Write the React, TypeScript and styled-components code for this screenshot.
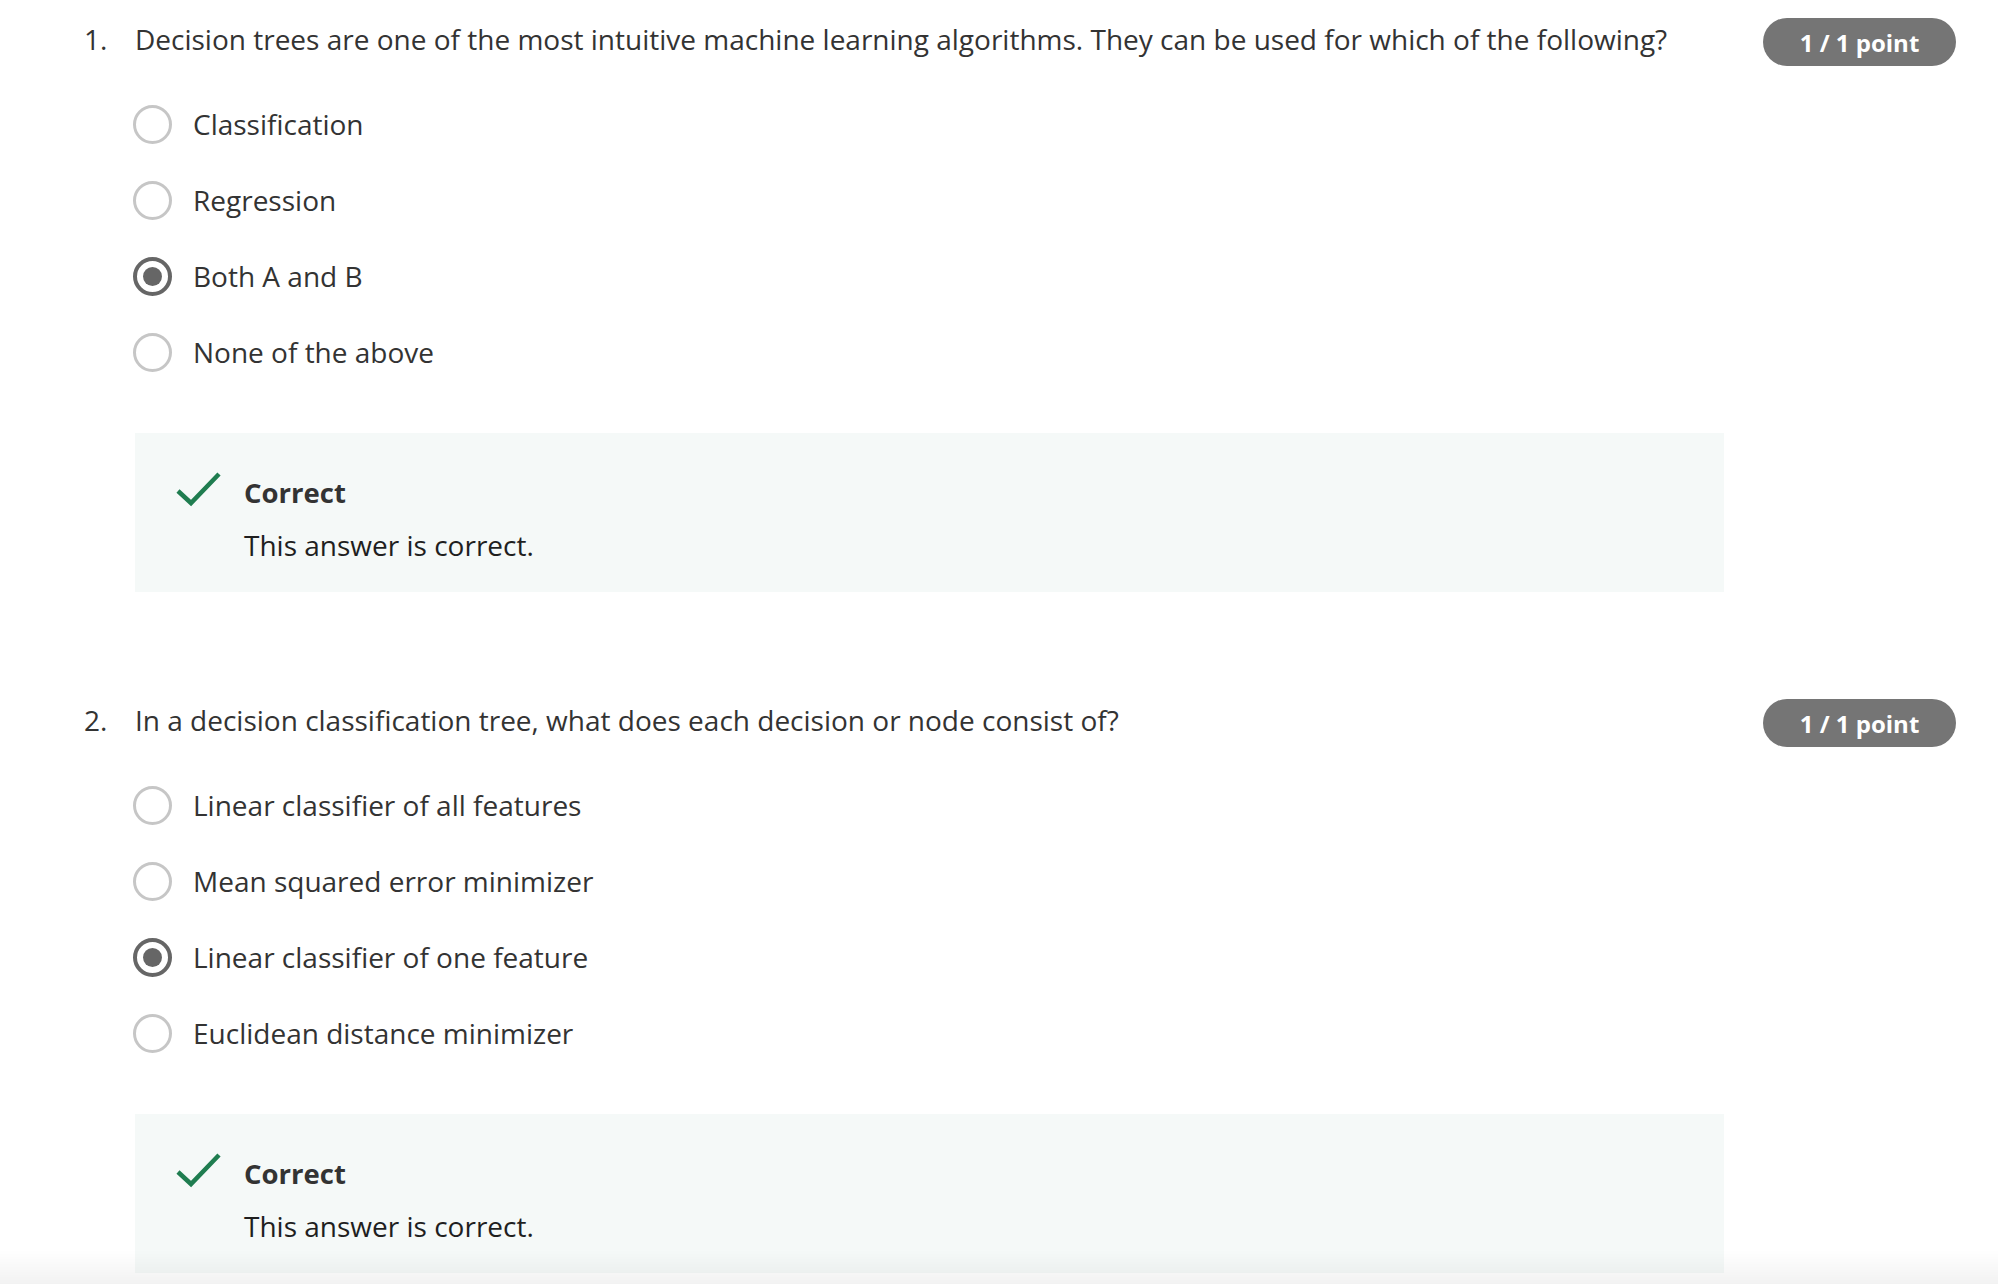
import React from "react";
import styled, { createGlobalStyle } from "styled-components";

const GlobalStyle = createGlobalStyle`
  html, body {
    margin: 0;
    padding: 0;
    background: #ffffff;
  }
  body {
    font-family: "Open Sans", "Noto Sans", "Liberation Sans", sans-serif;
    color: #333333;
  }
`;

type Question = {
  number: number;
  prompt: string;
  options: string[];
  selected: number;
  score: string;
};

const questions: Question[] = [
  {
    number: 1,
    prompt:
      "Decision trees are one of the most intuitive machine learning algorithms. They can be used for which of the following?",
    options: ["Classification", "Regression", "Both A and B", "None of the above"],
    selected: 2,
    score: "1 / 1 point",
  },
  {
    number: 2,
    prompt: "In a decision classification tree, what does each decision or node consist of?",
    options: [
      "Linear classifier of all features",
      "Mean squared error minimizer",
      "Linear classifier of one feature",
      "Euclidean distance minimizer",
    ],
    selected: 2,
    score: "1 / 1 point",
  },
];

const Page = styled.main`
  display: flex;
  flex-direction: column;
  gap: 107px;
  padding: 18px 42px 0 84px;
`;

const QuestionRow = styled.section`
  display: flex;
  align-items: flex-start;
`;

const Number = styled.div`
  width: 51px;
  flex-shrink: 0;
  padding-top: 1px;
  font-size: 28px;
  line-height: 40px;
  color: #333333;
`;

const Body = styled.div`
  flex: 1;
  display: flex;
  flex-direction: column;
`;

const Prompt = styled.div`
  padding-top: 1px;
  font-size: 28px;
  line-height: 40px;
  color: #333333;
`;

const Options = styled.ul`
  list-style: none;
  margin: 45px 0 0;
  padding: 0;
  display: flex;
  flex-direction: column;
  gap: 36px;
`;

const Option = styled.li`
  display: flex;
  align-items: center;
  height: 40px;
  gap: 21px;
  margin-left: -2px;
  font-size: 28px;
  color: #333333;
`;

const Radio = styled.span<{ $checked: boolean }>`
  box-sizing: border-box;
  width: 39px;
  height: 39px;
  border-radius: 50%;
  border: ${(p) => (p.$checked ? "4px solid #666666" : "3px solid #c6c6c6")};
  display: flex;
  align-items: center;
  justify-content: center;
  flex-shrink: 0;

  &::after {
    content: "";
    display: ${(p) => (p.$checked ? "block" : "none")};
    width: 19px;
    height: 19px;
    border-radius: 50%;
    background: #666666;
  }
`;

const Feedback = styled.div`
  margin-top: 61px;
  background: #f5f9f8;
  display: flex;
  gap: 22px;
  padding: 38px 40px 27px 41px;
`;

const CheckIcon = styled.svg`
  width: 46px;
  height: 36px;
  flex-shrink: 0;
`;

const FeedbackText = styled.div`
  display: flex;
  flex-direction: column;
  gap: 14px;
  padding-top: 4px;
`;

const FeedbackTitle = styled.div`
  font-size: 27.5px;
  line-height: 36px;
  font-weight: 700;
  color: #333333;
`;

const FeedbackMessage = styled.div`
  font-size: 28px;
  line-height: 40px;
  color: #1f1f1f;
`;

const Badge = styled.div`
  width: 193px;
  height: 48px;
  margin-left: 39px;
  flex-shrink: 0;
  border-radius: 24px;
  background: #757575;
  color: #ffffff;
  font-size: 24px;
  font-weight: 700;
  display: flex;
  align-items: center;
  justify-content: center;
`;

const BottomShade = styled.div`
  position: fixed;
  left: 0;
  right: 0;
  bottom: 0;
  height: 34px;
  pointer-events: none;
  background: linear-gradient(to bottom, rgba(0, 0, 0, 0), rgba(0, 0, 0, 0.05));
`;

const Check = () => (
  <CheckIcon viewBox="0 0 46 36">
    <polyline
      points="2,20 15,32 43,3"
      fill="none"
      stroke="#1f7d50"
      strokeWidth="4.5"
    />
  </CheckIcon>
);

const QuestionBlock = ({ q }: { q: Question }) => (
  <QuestionRow>
    <Number>{q.number}.</Number>
    <Body>
      <Prompt>{q.prompt}</Prompt>
      <Options>
        {q.options.map((opt, i) => (
          <Option key={opt}>
            <Radio $checked={i === q.selected} />
            {opt}
          </Option>
        ))}
      </Options>
      <Feedback>
        <Check />
        <FeedbackText>
          <FeedbackTitle>Correct</FeedbackTitle>
          <FeedbackMessage>This answer is correct.</FeedbackMessage>
        </FeedbackText>
      </Feedback>
    </Body>
    <Badge>{q.score}</Badge>
  </QuestionRow>
);

export default function App() {
  return (
    <>
      <GlobalStyle />
      <Page>
        {questions.map((q) => (
          <QuestionBlock key={q.number} q={q} />
        ))}
      </Page>
      <BottomShade />
    </>
  );
}
